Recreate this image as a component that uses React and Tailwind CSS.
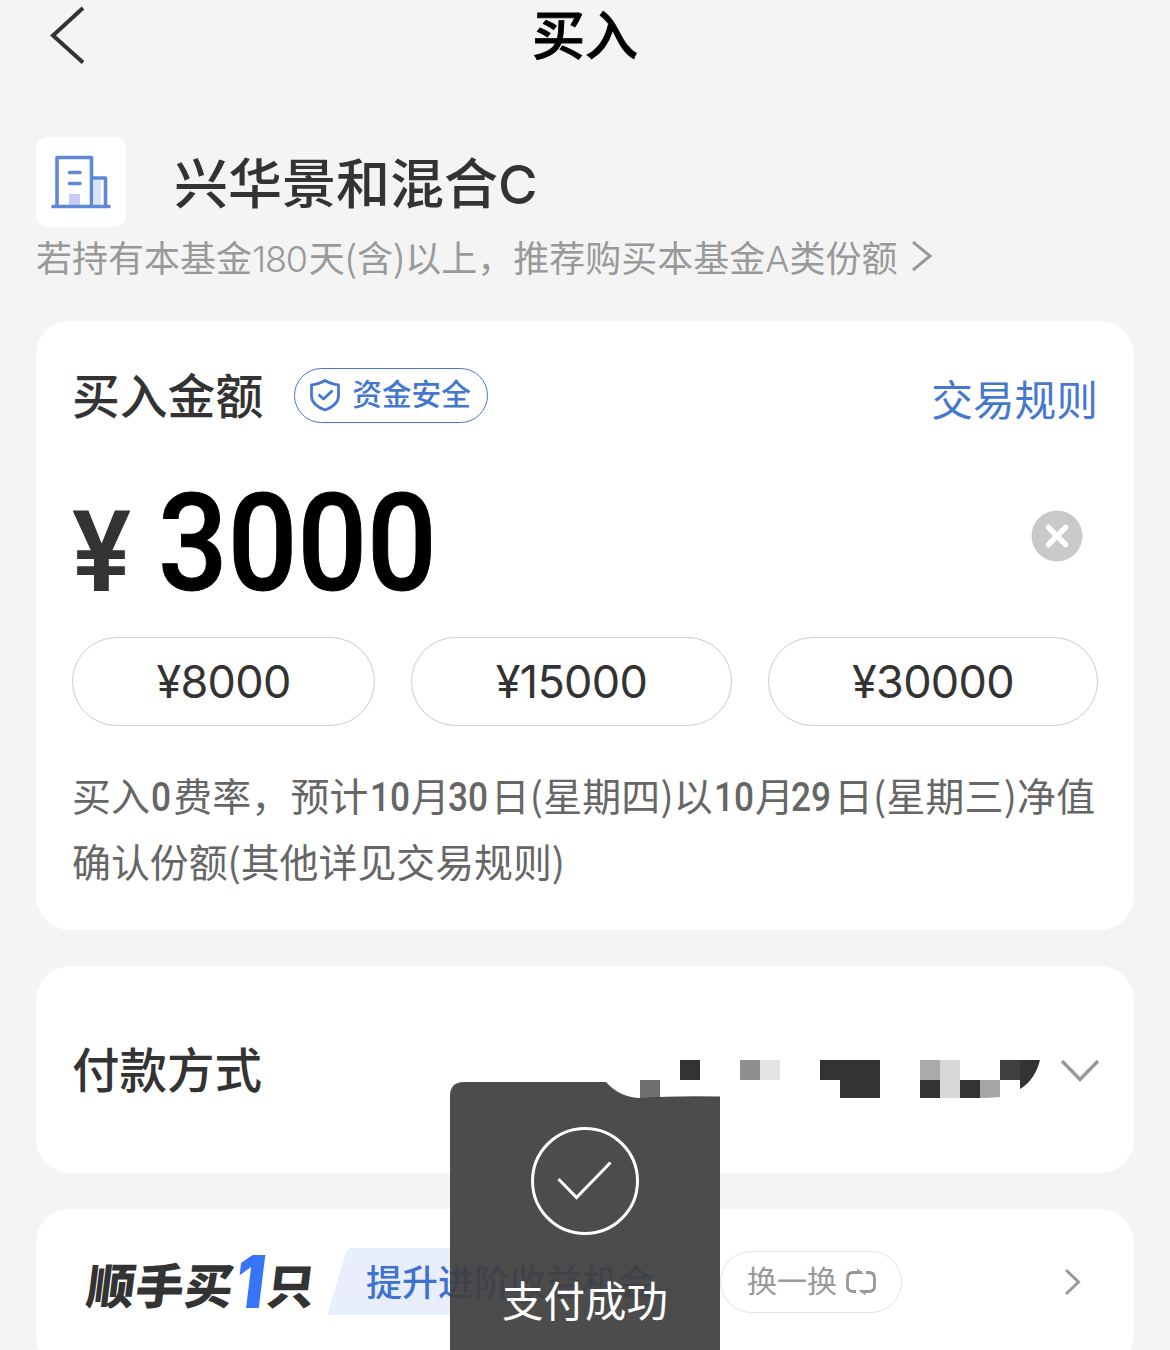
import React from "react";

function BackIcon() {
  return (
    <svg className="h-[60px] w-[40px]" viewBox="0 0 40 60" fill="none" stroke="#333" strokeWidth="4">
      <path d="M35 2L5 29.500L35 56.500" />
    </svg>
  );
}

function BuildingIcon() {
  return (
    <svg className="h-[90px] w-[90px]" viewBox="0 0 90 90" fill="none">
      <path d="M58 41h7v28h-7z" fill="#dbe4fb" />
      <path d="M33 57h11v11H33z" fill="#c8cbf4" />
      <g stroke="#5f88da" strokeWidth="3.600" strokeLinecap="round" strokeLinejoin="round">
        <path d="M21 69V20.500H55.500V69" />
        <path d="M56 41H69.500V69" />
        <path d="M17 69.500H73" />
        <path d="M33.500 35.500H44M33.500 46.500H44" />
      </g>
    </svg>
  );
}

function ShieldIcon() {
  return (
    <svg className="h-[34px] w-[32px]" viewBox="0 0 32 34" fill="none" stroke="#4577cf" strokeWidth="2.800" strokeLinejoin="round">
      <path d="M16 2.500C12 5 7 6.500 2.500 6.800V18C2.500 24 8 29.500 16 32C24 29.500 29.500 24 29.500 18V6.800C25 6.500 20 5 16 2.500Z" />
      <path d="M9.500 16.500L14.500 21L23.500 12.500" />
    </svg>
  );
}

function ClearIcon() {
  return (
    <svg className="h-[52px] w-[52px]" viewBox="0 0 52 52">
      <circle cx="26" cy="26" r="25.500" fill="#c9c9c9" />
      <path d="M17.500 17.500L34.500 34.500M34.500 17.500L17.500 34.500" stroke="#fff" strokeWidth="5.500" strokeLinecap="round" />
    </svg>
  );
}

function SwapIcon() {
  return (
    <svg className="h-[28px] w-[32px]" viewBox="0 0 32 28" fill="none" stroke="#999" strokeWidth="2.800">
      <path d="M11 23.500H8Q2.500 23.500 2.500 18V10.500Q2.500 4.500 8 4.500H17" />
      <path d="M21 4.500H24Q29.500 4.500 29.500 10.500V18Q29.500 23.500 24 23.500H16" />
      <path d="M12 0.500L19 5.900H12ZM20.500 27.500L13.500 22.100H20.500Z" fill="#999" stroke="none" />
    </svg>
  );
}

const mosaic = [
  [0, 20, 20, 18, "#707070"],
  [40, 0, 20, 20, "#333"],
  [100, 0, 20, 20, "#8f8f8f"],
  [120, 0, 20, 20, "#e3e3e3"],
  [180, 0, 60, 20, "#333"],
  [200, 20, 40, 18, "#333"],
  [280, 0, 20, 20, "#aaa"],
  [300, 0, 20, 38, "#d8d8d8"],
  [280, 20, 20, 18, "#333"],
  [320, 20, 20, 18, "#333"],
  [360, 0, 20, 20, "#404040"],
];

function MaskedAccount() {
  return (
    <svg className="h-[38px] w-[400px]" viewBox="0 0 400 38">
      {mosaic.map(([x, y, w, h, c]) => (
        <rect key={x + "-" + y} x={x} y={y} width={w} height={h} fill={c} shapeRendering="crispEdges" />
      ))}
      <path d="M340 20H360V37Q350 38 340 38Z" fill="#a5a5a5" />
      <path d="M380 0H400Q395 20 380 29Z" fill="#333" />
    </svg>
  );
}

function Num({ children, className = "w-[42px] pl-[1.500px]" }) {
  return (
    <span className={"inline-block tracking-normal whitespace-nowrap " + className}>
      <span className="inline-block origin-left scale-x-[0.88] font-[Roboto] text-[40px] leading-none font-medium">{children}</span>
    </span>
  );
}

function Toast() {
  return (
    <div className="absolute top-[1081px] left-[450px] h-[269px] w-[270px]">
      <svg className="absolute inset-0" width="270" height="269" viewBox="0 0 270 269">
        <path d="M0 269V15Q0 1 14 1H156Q170 16.500 190 17Q225 14.500 270 15.500V269Z" fill="#3f3f3f" fillOpacity="0.935" />
      </svg>
      <div className="relative flex flex-col items-center pt-[45px]">
        <svg className="h-[110px] w-[110px]" viewBox="0 0 110 110" fill="none" stroke="#fff" strokeWidth="3">
          <circle cx="55" cy="55" r="52.500" />
          <path d="M28.500 53L46.500 71.500L80.500 36.500" />
        </svg>
        <div className="mt-[33px] text-[41.500px] leading-[60px] whitespace-nowrap text-white">支付成功</div>
      </div>
    </div>
  );
}

export default function App() {
  return (
    <div className="relative h-[1350px] w-[1170px] overflow-hidden bg-[#f4f4f4] font-['Noto_Sans_CJK_SC',sans-serif] text-[#333]">
      <header className="grid h-[72px] grid-cols-3 items-center">
        <div className="pl-[48px]">
          <BackIcon />
        </div>
        <h1 className="mb-[8px] text-center text-[53px] leading-[64px] font-medium text-black [-webkit-text-stroke:0.800px_#000]">买入</h1>
      </header>

      <section className="px-[36px] pt-[65px]">
        <div className="flex h-[90px] items-center">
          <div className="h-[90px] w-[90px] rounded-[12px] bg-white">
            <BuildingIcon />
          </div>
          <div className="mt-[2px] ml-[48px] text-[54px] leading-[90px] font-medium whitespace-nowrap">
            兴华景和混合<span className="font-[Inter] text-[54px]">C</span>
          </div>
        </div>
        <div className="flex h-[60px] items-center text-[36px] whitespace-nowrap text-[#999]">
          <span>
            若持有本基金<span className="mr-[2px] font-[Inter] font-light tracking-[-1.200px]">180</span>天(含)以上，推荐购买本基金<span className="font-[Inter] font-light">A</span>类份额
          </span>
          <svg className="ml-[14px] h-[32px] w-[22px]" viewBox="0 0 22 32" fill="none" stroke="#999" strokeWidth="3">
            <path d="M2 1L19 15L2 29" />
          </svg>
        </div>
      </section>

      <main className="px-[36px]">
        <section className="mt-[34px] h-[609px] rounded-[34px] bg-white px-[36px] pt-[46px]">
          <div className="flex h-[56px] items-center">
            <h2 className="-mt-[3px] text-[47.800px] leading-[56px] font-medium whitespace-nowrap">买入金额</h2>
            <div className="ml-[31px] flex h-[55px] w-[194px] items-center rounded-full border border-[#4577cf] pl-[14px] text-[29.700px] whitespace-nowrap text-[#4577cf]">
              <ShieldIcon />
              <span className="-mt-[3px] ml-[11px] font-medium">资金安全</span>
            </div>
            <a className="mt-[6px] ml-auto text-[41.700px] whitespace-nowrap text-[#4577cf]">交易规则</a>
          </div>

          <div className="mt-[53px] flex h-[128px] items-center">
            <span className="mt-[24px] inline-block w-[86px] origin-left scale-x-[0.980] font-[Roboto] text-[113px] leading-none font-semibold">¥</span>
            <span className="mt-[8px] inline-block w-[280px] origin-left scale-x-[0.905] font-[Roboto] text-[135.500px] leading-[128px] font-medium text-black [-webkit-text-stroke:1px_#000]">3000</span>
            <div className="mb-[9px] ml-auto pr-[15px]">
              <ClearIcon />
            </div>
          </div>

          <div className="mt-[33px] flex gap-[36px] font-[Inter] text-[45px] leading-none tracking-[-0.700px]">
            <button className="h-[89px] w-[303px] rounded-full border border-[#ccc]">¥8000</button>
            <button className="h-[89px] w-[321px] rounded-full border border-[#ccc]">¥15000</button>
            <button className="h-[89px] w-[330px] rounded-full border border-[#ccc]">¥30000</button>
          </div>

          <div className="mt-[35px] text-[38.900px] leading-[66px] whitespace-nowrap text-[#666]">
            <p className="tracking-[0.200px]">
              买入<span className="inline-block w-[23px] pl-px"><span className="inline-block origin-left scale-x-[0.88] font-[Roboto] text-[40px] leading-none font-medium">0</span></span>费率，预计<Num>10</Num>月<Num className="-ml-[2px] w-[43px] pl-0">30</Num>日(星期四)以<Num>10</Num>月<Num className="-ml-[3px] w-[43px] pl-0">29</Num>日(星期三)净值
            </p>
            <p>确认份额(其他详见交易规则)</p>
          </div>
        </section>

        <section className="mt-[36px] flex h-[207px] items-center rounded-[34px] bg-white pr-[34px] pl-[36px]">
          <h2 className="-mt-[4px] text-[47.500px] font-medium whitespace-nowrap">付款方式</h2>
          <div className="mt-[18px] ml-auto">
            <MaskedAccount />
          </div>
          <svg className="mt-[2px] ml-[20px] h-[26px] w-[40px]" viewBox="0 0 40 26" fill="none" stroke="#999" strokeWidth="3.500">
            <path d="M2 3L20 21.500L38 3" />
          </svg>
        </section>

        <section className="mt-[36px] flex h-[160px] items-start rounded-[34px] bg-white pt-[39px] pr-[52px] pl-[52px]">
          <div className="flex h-[68px] w-[238px] -skew-x-[7deg] items-center text-[48px] leading-[68px] font-black tracking-[0.800px] whitespace-nowrap">
            <span className="mt-px">顺手买</span>
            <span className="w-[33px] scale-x-[0.880] text-center font-[Inter] text-[73px] font-black tracking-normal text-[#3875f6]">1</span>
            <span className="mt-px">只</span>
          </div>
          <div className="relative h-[68px] w-[368px]">
            <svg className="absolute inset-0" width="368" height="68" viewBox="0 0 368 68">
              <path d="M26 0H368V67H4Q1 67 2 64L20 5Q21 0 26 0Z" fill="#e8eefb" />
            </svg>
            <span className="relative ml-[40px] text-[36px] leading-[64px] font-medium whitespace-nowrap text-[#3f72d0]">提升进阶收益机会</span>
          </div>
          <div className="mt-[3px] ml-[26px] flex h-[62px] w-[182px] items-center rounded-full border border-[#e2e2e2] pl-[26px] text-[30px] whitespace-nowrap text-[#999]">
            <span className="-mt-[5px]">换一换</span>
            <span className="ml-[8px]">
              <SwapIcon />
            </span>
          </div>
          <svg className="mt-[20px] ml-auto h-[28px] w-[18px]" viewBox="0 0 18 28" fill="none" stroke="#999" strokeWidth="3">
            <path d="M2 2L14.500 14L2 26" />
          </svg>
        </section>
      </main>

      <Toast />
    </div>
  );
}
